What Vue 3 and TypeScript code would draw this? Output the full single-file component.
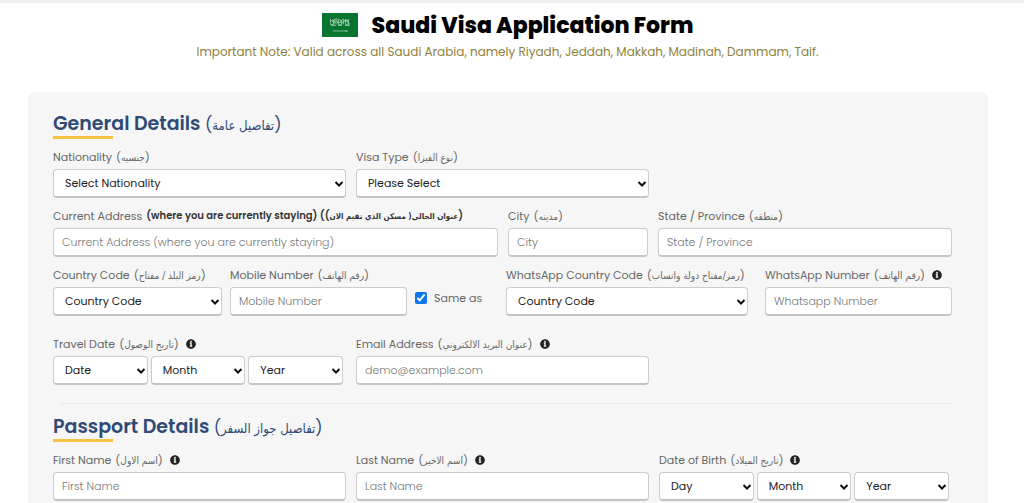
<script setup lang="ts">
import { ref } from 'vue'

interface Field {
  id: string
  label: string
  ar: string
  hint: string
}
interface DateGroup {
  id: string
  label: string
  ar: string
  parts: string[]
}

const visaFields: Field[] = [
  { id: 'nationality', label: 'Nationality', ar: 'جنسيه', hint: 'Select Nationality' },
  { id: 'visa-type', label: 'Visa Type', ar: 'نوع الفيزا', hint: 'Please Select' },
]
const addressRow: Field[] = [
  { id: 'city', label: 'City', ar: 'مدينه', hint: 'City' },
  { id: 'state', label: 'State / Province', ar: 'منطقه', hint: 'State / Province' },
]
const names: Field[] = [
  { id: 'first-name', label: 'First Name', ar: 'اسم الاول', hint: 'First Name' },
  { id: 'last-name', label: 'Last Name', ar: 'اسم الاخير', hint: 'Last Name' },
]
const travel: DateGroup = { id: 'travel', label: 'Travel Date', ar: 'تاريخ الوصول', parts: ['Date', 'Month', 'Year'] }
const birth: DateGroup = { id: 'birth', label: 'Date of Birth', ar: 'تاريخ الميلاد', parts: ['Day', 'Month', 'Year'] }
const sameAs = ref(true)
</script>

<template>
  <main class="page">
    <svg width="0" height="0" class="defs" aria-hidden="true">
      <symbol id="info" viewBox="0 0 512 512">
        <path d="M256 8C119 8 8 119 8 256s111 248 248 248 248-111 248-248S393 8 256 8zm0 84a46 46 0 1 1 0 92 46 46 0 0 1 0-92zm64 292c0 7-5 12-12 12H204c-7 0-12-5-12-12v-36c0-7 5-12 12-12h16v-88h-16c-7 0-12-5-12-12v-30c0-7 5-12 12-12h76c7 0 12 5 12 12v130h16c7 0 12 5 12 12z" />
      </symbol>
      <symbol id="arrow" viewBox="0 0 10 8">
        <path d="M1.5 2L5 5.5L8.5 2" fill="none" stroke="#111" stroke-width="2" />
      </symbol>
    </svg>

    <header class="head">
      <h1 class="title">
        <svg class="flag" viewBox="0 0 36 24" aria-hidden="true">
          <rect width="36" height="24" fill="#06752f" />
          <g fill="none" stroke="#b4d6bd" stroke-width=".7">
            <path d="M8.5 6v5.500h3V7m1.500-1v5.500m-3-4l5-2m0 0v6m1.500-5.500v5.500h3V7m-2 2l4-3m0 0v5.500m2-5.500v5.500h3V6m-2 0l3 5.500M9 12.500h5m2 0h4m3 0h5" />
            <path d="M10 8.500h3m2 1h4m3-1.500h4M12 10.500l3-3m5 3l3-3.500M8.500 6.500l3 3m6-3.500l3 4m4-3l2 4" />
            <path d="M11 18h15M24 17v2" />
          </g>
        </svg>
        <span>Saudi Visa Application Form</span>
      </h1>
      <p class="note">Important Note: Valid across all Saudi Arabia, namely Riyadh, Jeddah, Makkah, Madinah, Dammam, Taif.</p>
    </header>

    <form class="panel" @submit.prevent>
      <h2 class="section">General Details <span class="ar">(<bdi lang="ar">تفاصيل عامة</bdi>)</span></h2>

      <div class="row thirds">
        <div v-for="f in visaFields" :key="f.id" class="field">
          <label class="label" :for="f.id">{{ f.label }} <span class="ar">(<bdi lang="ar">{{ f.ar }}</bdi>)</span></label>
          <div class="pick">
            <select :id="f.id" class="control"><option>{{ f.hint }}</option></select>
            <svg class="arrow" aria-hidden="true"><use href="#arrow" /></svg>
          </div>
        </div>
      </div>

      <div class="row address">
        <div class="field">
          <label class="label" for="address">Current Address <strong>(where you are currently staying) (<span class="ar">(<bdi lang="ar">عنوان الحالي( مسكن الذي تقيم الان</bdi>)</span></strong></label>
          <input id="address" class="control" type="text" placeholder="Current Address (where you are currently staying)">
        </div>
        <div v-for="f in addressRow" :key="f.id" class="field">
          <label class="label" :for="f.id">{{ f.label }} <span class="ar">(<bdi lang="ar">{{ f.ar }}</bdi>)</span></label>
          <input :id="f.id" class="control" type="text" :placeholder="f.hint">
        </div>
      </div>

      <div class="row phones">
        <div class="field">
          <label class="label" for="code">Country Code <span class="ar">(<bdi lang="ar">رمز البلد / مفتاح</bdi>)</span></label>
          <div class="pick">
            <select id="code" class="control"><option>Country Code</option></select>
            <svg class="arrow" aria-hidden="true"><use href="#arrow" /></svg>
          </div>
        </div>
        <div class="field">
          <label class="label" for="mobile">Mobile Number <span class="ar">(<bdi lang="ar">رقم الهاتف</bdi>)</span></label>
          <input id="mobile" class="control" type="tel" placeholder="Mobile Number">
        </div>
        <label class="same"><input v-model="sameAs" class="tick" type="checkbox"><span>Same as</span></label>
        <div class="field">
          <label class="label" for="wa-code">WhatsApp Country Code <span class="ar">(<bdi lang="ar">رمز/مفتاح دولة واتساب</bdi>)</span></label>
          <div class="pick">
            <select id="wa-code" class="control"><option>Country Code</option></select>
            <svg class="arrow" aria-hidden="true"><use href="#arrow" /></svg>
          </div>
        </div>
        <div class="field whatsapp">
          <label class="label" for="wa-number">WhatsApp Number <span class="ar">(<bdi lang="ar">رقم الهاتف</bdi>)</span><svg class="info"><use href="#info" /></svg></label>
          <input id="wa-number" class="control" type="tel" placeholder="Whatsapp Number">
        </div>
      </div>

      <div class="row thirds">
        <fieldset class="field dates">
          <legend class="label">{{ travel.label }} <span class="ar">(<bdi lang="ar">{{ travel.ar }}</bdi>)</span><svg class="info"><use href="#info" /></svg></legend>
          <div class="parts">
            <div v-for="p in travel.parts" :key="p" class="pick">
              <select :id="travel.id + p" class="control" :aria-label="travel.label + ' ' + p"><option>{{ p }}</option></select>
              <svg class="arrow" aria-hidden="true"><use href="#arrow" /></svg>
            </div>
          </div>
        </fieldset>
        <div class="field">
          <label class="label" for="email">Email Address <span class="ar">(<bdi lang="ar">عنوان البريد الالكتروني</bdi>)</span><svg class="info"><use href="#info" /></svg></label>
          <input id="email" class="control" type="email" placeholder="demo@example.com">
        </div>
      </div>

      <hr class="rule">

      <h2 class="section">Passport Details <span class="ar">(<bdi lang="ar">تفاصيل جواز السفر</bdi>)</span></h2>

      <div class="row thirds">
        <div v-for="f in names" :key="f.id" class="field">
          <label class="label" :for="f.id">{{ f.label }} <span class="ar">(<bdi lang="ar">{{ f.ar }}</bdi>)</span><svg class="info"><use href="#info" /></svg></label>
          <input :id="f.id" class="control" type="text" :placeholder="f.hint">
        </div>
        <fieldset class="field dates">
          <legend class="label">{{ birth.label }} <span class="ar">(<bdi lang="ar">{{ birth.ar }}</bdi>)</span><svg class="info"><use href="#info" /></svg></legend>
          <div class="parts">
            <div v-for="p in birth.parts" :key="p" class="pick">
              <select :id="birth.id + p" class="control" :aria-label="birth.label + ' ' + p"><option>{{ p }}</option></select>
              <svg class="arrow" aria-hidden="true"><use href="#arrow" /></svg>
            </div>
          </div>
        </fieldset>
      </div>
    </form>
  </main>
</template>

<style>
body {
  margin: 0;
  background: #fff;
}
</style>

<style scoped>
.page {
  border-top: 3px solid #f0f0f0;
  font-family: Poppins, Inter, "DejaVu Sans Condensed", "DejaVu Sans", sans-serif;
  color: #666;
}
.page * {
  box-sizing: border-box;
}
.defs {
  position: absolute;
}
.head {
  padding: 6px 9px 0 0;
  text-align: center;
}
.title {
  display: flex;
  justify-content: center;
  align-items: center;
  gap: 14px;
  height: 32px;
  margin: 0;
  font-size: 22px;
  font-weight: 800;
  color: #000;
}
.flag {
  width: 36px;
  height: 24px;
}
.note {
  margin: 2px 0 0;
  font-size: 12px;
  line-height: 18px;
  color: #8f813c;
}
.panel {
  margin: 31px 36px 0 28px;
  padding: 18px 36px 32px 25px;
  border-radius: 8px;
  background: #f6f6f6;
}
.section {
  position: relative;
  height: 29px;
  margin: 0 0 9px;
  font-size: 19px;
  line-height: 28px;
  font-weight: 600;
  color: #2f4a75;
  white-space: nowrap;
}
.section::after {
  content: "";
  position: absolute;
  left: 0;
  bottom: 0;
  width: 60px;
  height: 3px;
  background: #f7c244;
}
.section .ar {
  font-size: 16px;
  font-weight: 400;
}
.row {
  display: grid;
  column-gap: 10px;
  margin-bottom: 9px;
}
.thirds {
  grid-template-columns: repeat(3, minmax(0, 1fr));
}
.address {
  grid-template-columns: 445fr 140fr 294fr;
}
.phones {
  grid-template-columns: 169fr 177fr 83fr 242fr 196fr;
  column-gap: 8px;
  margin-bottom: 19px;
}
.whatsapp {
  margin-left: 9px;
}
.field {
  min-width: 0;
}
.dates {
  margin: 0;
  padding: 0;
  border: 0;
}
.label {
  display: flex;
  align-items: center;
  gap: 4px;
  height: 18px;
  margin-bottom: 3px;
  padding: 0;
  font-size: 11px;
  line-height: 18px;
  white-space: nowrap;
}
.label strong {
  font-size: 10px;
  font-weight: 600;
  color: #333;
}
.ar bdi {
  font-family: "DejaVu Sans Condensed", "DejaVu Sans", sans-serif;
  font-size: 10px;
}
.section .ar bdi {
  font-size: 13px;
}
strong .ar bdi {
  font-size: 8px;
}
.info {
  width: 10px;
  height: 10px;
  margin-left: 3px;
  fill: #222;
}
.control {
  display: block;
  width: 100%;
  height: 29px;
  margin: 0;
  padding: 0 8px;
  border: 1px solid #ccc;
  border-bottom: 2px solid #c4c4c4;
  border-radius: 4px;
  background: #fff;
  font-family: inherit;
  font-size: 11px;
  color: #222;
}
.control::placeholder {
  color: #777;
  font-weight: 300;
  opacity: 1;
}
.pick {
  position: relative;
}
select.control {
  appearance: none;
  padding: 0 16px 0 11px;
}
.arrow {
  position: absolute;
  right: 2px;
  top: 11px;
  width: 10px;
  height: 8px;
  pointer-events: none;
}
.same {
  display: flex;
  align-items: center;
  gap: 7px;
  height: 18px;
  margin-top: 23px;
  font-size: 11px;
  white-space: nowrap;
}
.tick {
  width: 12px;
  height: 12px;
  margin: 0;
  accent-color: #0b76ef;
}
.parts {
  display: grid;
  grid-template-columns: repeat(3, 1fr);
  gap: 3px;
  margin-right: 3px;
}
.rule {
  height: 1px;
  margin: 18px 0 9px 8px;
  border: 0;
  background: #e9e9e9;
}
</style>
